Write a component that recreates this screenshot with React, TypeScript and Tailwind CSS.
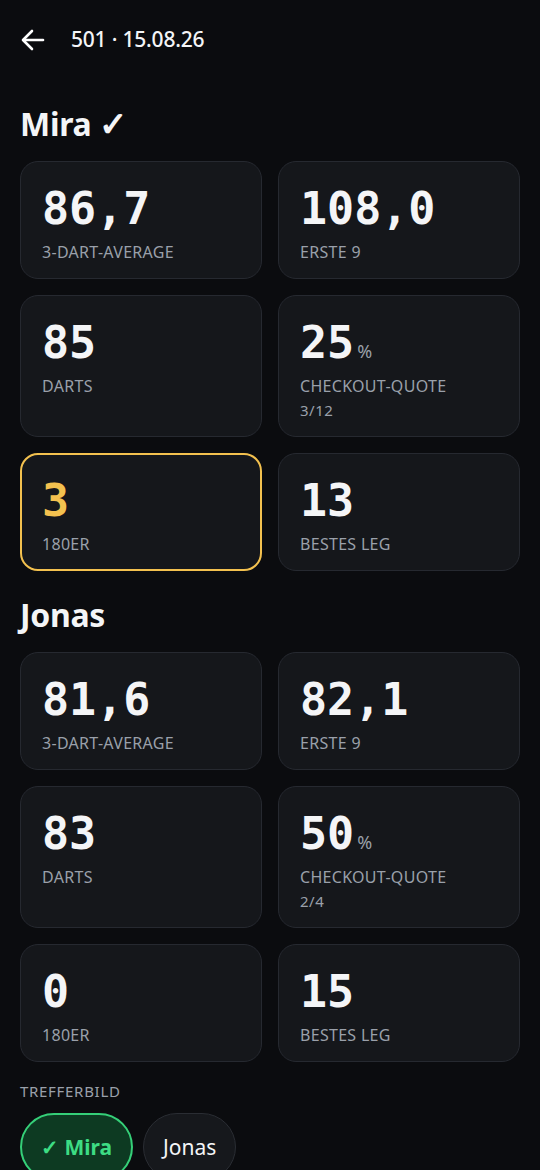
import React from 'react';

interface Stat {
  value: string;
  label: string;
  unit?: string;
  sub?: string;
  highlight?: boolean;
}

interface Player {
  name: string;
  winner?: boolean;
  stats: Stat[];
}

const players: Player[] = [
  {
    name: 'Mira',
    winner: true,
    stats: [
      { value: '86,7', label: '3-Dart-Average' },
      { value: '108,0', label: 'Erste 9' },
      { value: '85', label: 'Darts' },
      { value: '25', unit: '%', label: 'Checkout-Quote', sub: '3/12' },
      { value: '3', label: '180er', highlight: true },
      { value: '13', label: 'Bestes Leg' },
    ],
  },
  {
    name: 'Jonas',
    stats: [
      { value: '81,6', label: '3-Dart-Average' },
      { value: '82,1', label: 'Erste 9' },
      { value: '83', label: 'Darts' },
      { value: '50', unit: '%', label: 'Checkout-Quote', sub: '2/4' },
      { value: '0', label: '180er' },
      { value: '15', label: 'Bestes Leg' },
    ],
  },
];

const StatCard = ({ value, label, unit, sub, highlight }: Stat) => (
  <div
    className={
      highlight
        ? 'rounded-[18px] border-2 border-[#f3c14f] bg-[#15171b] px-[20px] pt-[24px] pb-[15px]'
        : 'rounded-[18px] border border-[#262930] bg-[#15171b] px-[21px] pt-[25px] pb-[16px]'
    }
  >
    <div className="flex items-baseline">
      <span
        className={`font-['DejaVu_Sans_Mono',monospace] text-[45px] leading-[44px] font-bold ${
          highlight ? 'text-[#f3c14f]' : 'text-[#f4f5f7]'
        }`}
      >
        {value}
      </span>
      {unit && <span className="ml-[3px] text-[18px] text-[#9aa0aa]">{unit}</span>}
    </div>
    <div className="mt-[11px] text-[16px] leading-[20px] tracking-[0.3px] text-[#9aa0aa] uppercase">
      {label}
    </div>
    {sub && <div className="mt-[4px] text-[15px] leading-[20px] tracking-[0.5px] text-[#9aa0aa]">{sub}</div>}
  </div>
);

export default function App() {
  return (
    <div className="min-h-screen bg-[#0b0c0f] font-['Noto_Sans',sans-serif] text-white">
      <div className="flex h-[80px] items-center px-5">
        <svg width="24" height="22" viewBox="0 0 24 22" fill="none" stroke="currentColor" strokeWidth={2.6} strokeLinecap="round" strokeLinejoin="round" className="ml-[1px]">
          <path d="M22 11H3" />
          <path d="M11 2 2 11l9 9" />
        </svg>
        <h1 className="ml-[26px] text-[21px] font-medium tracking-[-0.2px] text-[#f4f5f7]">501 · 15.08.26</h1>
      </div>

      {players.map((p, i) => (
        <section key={p.name} className={i === 0 ? 'mt-[23px] px-5' : 'mt-[24px] px-5'}>
          <h2 className="mb-[17px] text-[32px] leading-[40px] font-bold tracking-[-0.3px] text-[#f4f5f7]">
            {p.name}
            {p.winner && <span className="ml-[8px] text-[34px] font-bold">✓</span>}
          </h2>
          <div className="grid grid-cols-2 gap-4">
            {p.stats.map(s => (
              <StatCard key={s.label} {...s} />
            ))}
          </div>
        </section>
      ))}

      <div className="mt-[19px] px-5">
        <div className="text-[15px] leading-[20px] tracking-[0.7px] text-[#9aa0aa] uppercase">Trefferbild</div>
        <div className="mt-[12px] flex gap-[10px]">
          <button className="rounded-full border-2 border-[#35cf78] bg-[#0d3a22] px-[19px] py-[18px] text-[21px] leading-[28px] font-bold text-[#3ddc84]">
            ✓ Mira
          </button>
          <button className="rounded-full border border-[#2a2d33] bg-[#16181c] px-[19px] py-[19px] text-[21px] leading-[28px] text-[#f4f5f7]">
            Jonas
          </button>
        </div>
      </div>
    </div>
  );
}
